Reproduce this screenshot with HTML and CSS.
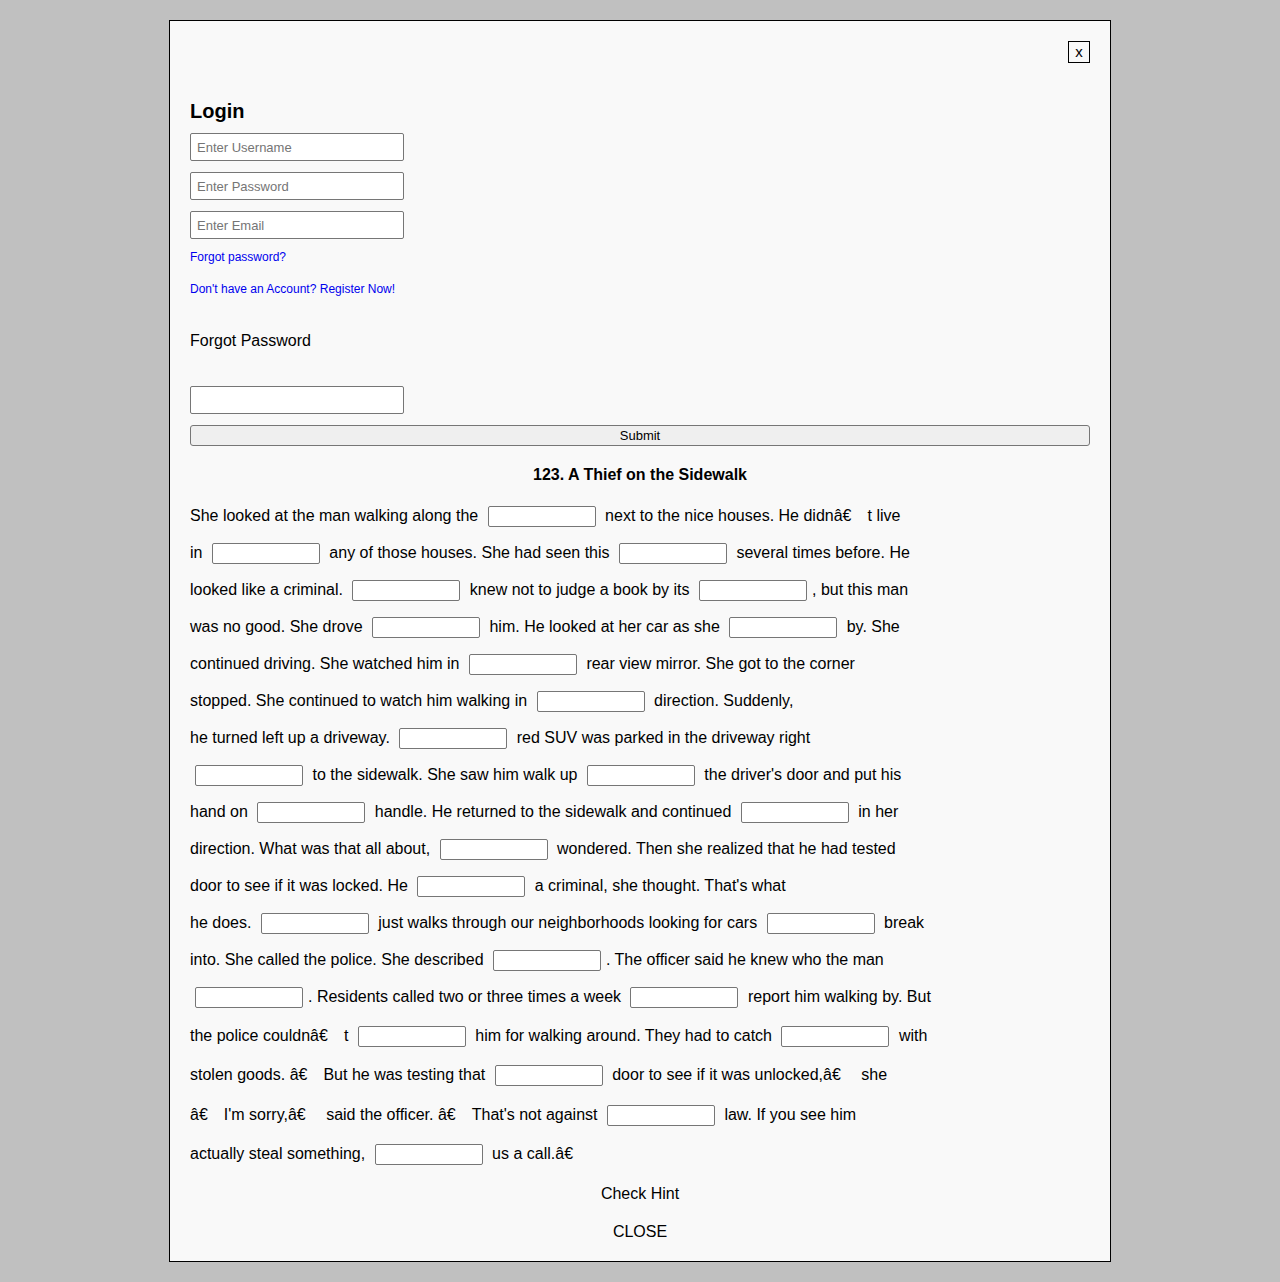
FILE: index.html
```html
<!DOCTYPE html>
<html>
<head>
<meta charset="utf-8">
<title>A Thief on the Sidewalk</title>
<link rel="stylesheet" href="styles.css">
</head>
<body>
<div class="modal">
  <div class="close-row"><button class="xbtn">x</button></div>
  <h2 class="login-title">Login</h2>
  <input class="field" type="text" placeholder="Enter Username">
  <input class="field" type="password" placeholder="Enter Password">
  <input class="field" type="text" placeholder="Enter Email">
  <a class="link first" href="#">Forgot password?</a>
  <a class="link second" href="#">Don't have an Account? Register Now!</a>
  <div class="fp-title">Forgot Password</div>
  <input class="field fp" type="text">
  <button class="submit">Submit</button>
  <div class="story-title">123. A Thief on the Sidewalk</div>
  <div class="story">
    <div class="ln t">She looked at the man walking along the <input class="b"> next to the nice houses. He didnâ€<span class="g"></span>t live</div>
    <div class="ln">in <input class="b"> any of those houses. She had seen this <input class="b"> several times before. He</div>
    <div class="ln">looked like a criminal. <input class="b"> knew not to judge a book by its <input class="b">, but this man</div>
    <div class="ln">was no good. She drove <input class="b"> him. He looked at her car as she <input class="b"> by. She</div>
    <div class="ln">continued driving. She watched him in <input class="b"> rear view mirror. She got to the corner</div>
    <div class="ln">stopped. She continued to watch him walking in <input class="b"> direction. Suddenly,</div>
    <div class="ln">he turned left up a driveway. <input class="b"> red SUV was parked in the driveway right</div>
    <div class="ln"><input class="b"> to the sidewalk. She saw him walk up <input class="b"> the driver's door and put his</div>
    <div class="ln">hand on <input class="b"> handle. He returned to the sidewalk and continued <input class="b"> in her</div>
    <div class="ln">direction. What was that all about, <input class="b"> wondered. Then she realized that he had tested</div>
    <div class="ln">door to see if it was locked. He <input class="b"> a criminal, she thought. That's what</div>
    <div class="ln">he does. <input class="b"> just walks through our neighborhoods looking for cars <input class="b"> break</div>
    <div class="ln">into. She called the police. She described <input class="b">. The officer said he knew who the man</div>
    <div class="ln"><input class="b">. Residents called two or three times a week <input class="b"> report him walking by. But</div>
    <div class="ln t">the police couldnâ€<span class="g"></span>t <input class="b"> him for walking around. They had to catch <input class="b"> with</div>
    <div class="ln t">stolen goods. â€<span class="q"></span>But he was testing that <input class="b"> door to see if it was unlocked,â€<span class="q"></span> she</div>
    <div class="ln t3">â€<span class="q"></span>I'm sorry,â€<span class="q"></span> said the officer. â€<span class="q"></span>That's not against <input class="b"> law. If you see him</div>
    <div class="ln t">actually steal something, <input class="b"> us a call.â€</div>
  </div>
  <div class="hint">Check Hint</div>
  <div class="close-text">CLOSE</div>
</div>
</body>
</html>
```

FILE: styles.css
```css
html, body {
  margin: 0;
  padding: 0;
  background: #c0c0c0;
}
body {
  font-family: "Liberation Sans", Arial, sans-serif;
  color: #000;
}
.modal {
  width: 900px;
  margin: 20px auto 20px;
  padding: 20px 20px 20px;
  background: #f9f9f9;
  border: 1px solid #000;
}
.close-row {
  display: flex;
  justify-content: flex-end;
  height: 22px;
}
.xbtn {
  width: 22px;
  height: 22px;
  padding: 0;
  margin: 0;
  border: 1px solid #000;
  background: transparent;
  font-family: "Liberation Sans", Arial, sans-serif;
  font-size: 15px;
  line-height: 18px;
  color: #000;
}
.login-title {
  margin: 37px 0 10px;
  font-size: 20px;
  line-height: 23px;
  font-weight: bold;
}
.field {
  display: block;
  box-sizing: border-box;
  width: 214px;
  height: 28px;
  margin: 0 0 11px;
  padding: 0 6px;
  border: 1px solid #767676;
  border-radius: 2px;
  background: #fff;
  font-family: "Liberation Sans", Arial, sans-serif;
  font-size: 13px;
  color: #000;
}
.field::placeholder {
  color: #757575;
}
.link {
  display: block;
  font-size: 12px;
  line-height: 14px;
  color: #0000ee;
  text-decoration: none;
}
.link.second {
  margin-top: 18px;
}
.fp-title {
  margin-top: 36px;
  font-size: 16px;
  line-height: 18px;
}
.field.fp {
  margin-top: 36px;
}
.submit {
  display: block;
  box-sizing: border-box;
  width: 900px;
  height: 21px;
  margin: 0;
  padding: 0;
  border: 1px solid #767676;
  border-radius: 3px;
  background: #efefef;
  font-family: "Liberation Sans", Arial, sans-serif;
  font-size: 13px;
  color: #000;
}
.story-title {
  margin-top: 20px;
  text-align: center;
  font-weight: bold;
  font-size: 16px;
  line-height: 18px;
}
.story {
  margin-top: 11px;
  font-size: 16px;
}
.ln {
  height: 37px;
  line-height: 37px;
  white-space: nowrap;
}
.ln.t {
  padding-top: 2px;
}
.ln.t3 {
  padding-top: 3px;
}
.b {
  box-sizing: border-box;
  width: 108px;
  height: 21px;
  margin: 0 5px;
  padding: 0 4px;
  border: 1px solid #767676;
  border-radius: 2px;
  background: #fff;
  vertical-align: middle;
  font-family: "Liberation Sans", Arial, sans-serif;
  font-size: 13px;
}
.g {
  display: inline-block;
  width: 16px;
}
.q {
  display: inline-block;
  width: 16px;
}
.hint {
  margin-top: 13px;
  text-align: center;
  font-size: 16px;
  line-height: 18px;
}
.close-text {
  margin-top: 20px;
  text-align: center;
  font-size: 16px;
  line-height: 18px;
}
```
